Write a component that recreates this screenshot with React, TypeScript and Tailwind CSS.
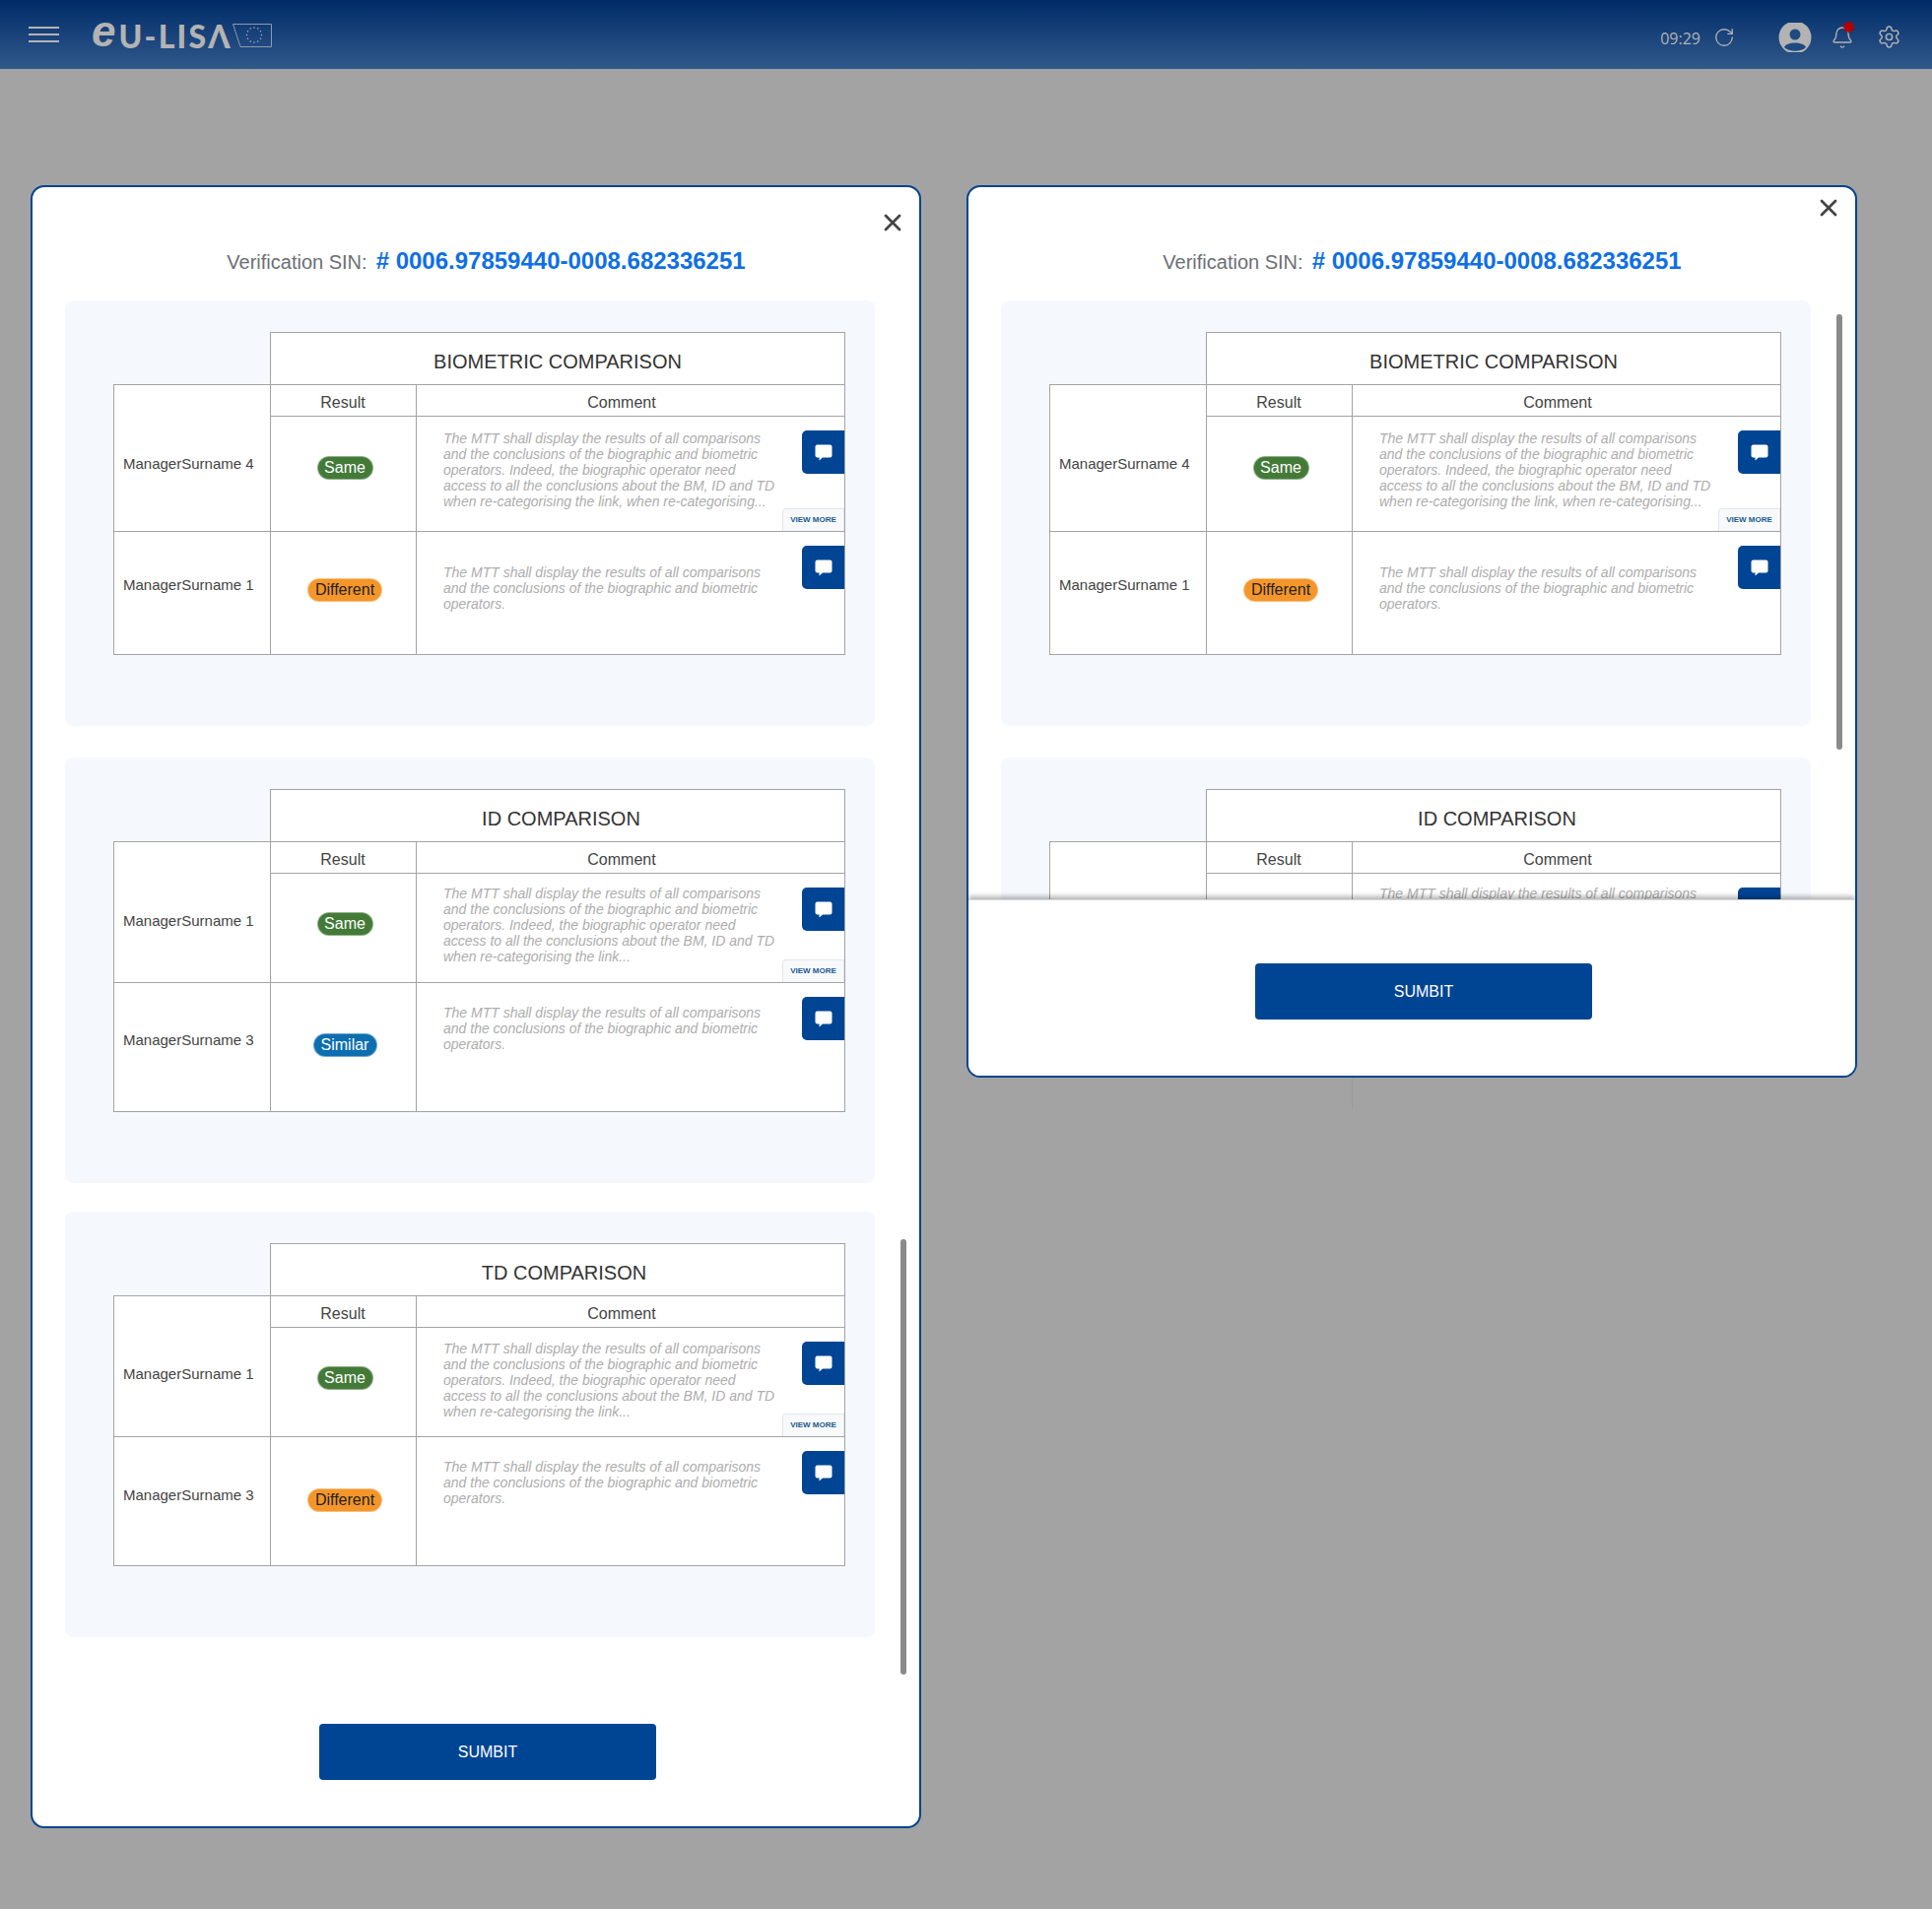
import { Bell, RotateCw, Settings, X } from "lucide-react";

type Status = "Same" | "Different" | "Similar";

type Row = {
  name: string;
  status: Status;
  text: string;
  labelPad: string;
  pillPad: string;
  commentPad: string;
  viewMore?: boolean;
};

type Section = {
  title: string;
  titlePad: string;
  gridRows: string;
  rows: [Row, Row];
};

const shortText =
  "The MTT shall display the results of all comparisons and the conclusions of the biographic and biometric operators.";
const longBase =
  "The MTT shall display the results of all comparisons and the conclusions of the biographic and biometric operators. Indeed, the biographic operator need access to all the conclusions about the BM, ID and TD when re-categorising the link";

const sections: Section[] = [
  {
    title: "BIOMETRIC COMPARISON",
    titlePad: "pl-0",
    gridRows: "grid-rows-[31px_117px_125px]",
    rows: [
      { name: "ManagerSurname 4", status: "Same", text: longBase + ", when re-categorising...", labelPad: "pt-[12px]", pillPad: "pb-[12px]", commentPad: "pt-[14px]", viewMore: true },
      { name: "ManagerSurname 1", status: "Different", text: shortText, labelPad: "pb-[16px]", pillPad: "pb-[7px]", commentPad: "pt-[33px]" },
    ],
  },
  {
    title: "ID COMPARISON",
    titlePad: "pl-[7px]",
    gridRows: "grid-rows-[31px_111px_131px]",
    rows: [
      { name: "ManagerSurname 1", status: "Same", text: longBase + "...", labelPad: "pt-[19px]", pillPad: "pb-[9px]", commentPad: "pt-[12px]", viewMore: true },
      { name: "ManagerSurname 3", status: "Similar", text: shortText, labelPad: "pb-[13px]", pillPad: "pb-[4px]", commentPad: "pt-[22px]" },
    ],
  },
  {
    title: "TD COMPARISON",
    titlePad: "pl-[13px]",
    gridRows: "grid-rows-[31px_111px_131px]",
    rows: [
      { name: "ManagerSurname 1", status: "Same", text: longBase + "...", labelPad: "pt-[17px]", pillPad: "pb-[9px]", commentPad: "pt-[13px]", viewMore: true },
      { name: "ManagerSurname 3", status: "Different", text: shortText, labelPad: "pb-[12px]", pillPad: "pb-[3px]", commentPad: "pt-[22px]" },
    ],
  },
];

function Logo() {
  return (
    <div className="ml-[33px] pt-[3px] flex items-center text-[#b3b3b3] font-['Lato',sans-serif]">
      <span className="text-[44px] leading-none font-bold italic font-['Liberation_Sans',sans-serif] mr-[3px] -mt-[9px]">e</span>
      <span className="text-[32px] leading-none font-black tracking-[2.2px]">U-LISΛ</span>
      <svg width="40" height="24" viewBox="0 0 40 24" className="-mt-[1px]" fill="none">
        <path d="M0.5 0.5H39.5V23.5H8Z" stroke="#8f9bab" strokeWidth="1" />
        {[0, 30, 60, 90, 120, 150, 180, 210, 240, 270, 300, 330].map((a) => (
          <circle
            key={a}
            cx={22 + 7.5 * Math.cos((a * Math.PI) / 180)}
            cy={11.5 + 7.5 * Math.sin((a * Math.PI) / 180)}
            r="0.8"
            fill="#a8b0bc"
          />
        ))}
      </svg>
    </div>
  );
}

function TopBar() {
  return (
    <header className="h-[70px] shrink-0 flex items-center bg-gradient-to-b from-[#002b67] to-[#30598c] pl-[29px] pr-[31px]">
      <div className="flex flex-col gap-[4.5px]">
        <span className="block w-[31px] h-[2.5px] bg-[#b3b3b3]" />
        <span className="block w-[31px] h-[2.5px] bg-[#b3b3b3]" />
        <span className="block w-[31px] h-[2.5px] bg-[#b3b3b3]" />
      </div>
      <Logo />
      <div className="ml-auto flex items-center pt-[5px] text-[#b3b3b3]">
        <span className="mt-[3px] text-[16px] font-['Open_Sans',sans-serif]">09:29</span>
        <RotateCw size={22} strokeWidth={1.4} className="ml-[13px]" />
        <svg width="34" height="30" viewBox="0 0 34 30" className="ml-[44px]">
          <circle cx="17" cy="15" r="16.5" fill="#b3b3b3" />
          <circle cx="17" cy="12" r="5.5" fill="#1f4a80" />
          <path d="M6 25c2-6 20-6 22 0-5 5-17 5-22 0Z" fill="#1f4a80" />
        </svg>
        <span className="relative ml-[19px] block">
          <Bell size={24} strokeWidth={1.3} />
          <span className="absolute -top-[3px] right-[1px] w-[9px] h-[9px] rounded-full bg-[#b50000] shadow-[0_0_0_1.5px_rgba(181,0,0,0.5)]" />
        </span>
        <Settings size={25} strokeWidth={1.4} className="ml-[23px]" />
      </div>
    </header>
  );
}

function Pill({ status }: { status: Status }) {
  const color =
    status === "Same"
      ? "bg-[#437a38] text-white w-[57px]"
      : status === "Different"
        ? "bg-[#f4962a] text-[#222] w-[76px]"
        : "bg-[#0d6eb0] text-white w-[65px]";
  return (
    <span className={`${color} h-[24px] rounded-full border border-white/40 flex items-center justify-center text-[16px] leading-none`}>
      {status}
    </span>
  );
}

function CommentIcon() {
  return (
    <svg width="18" height="17" viewBox="0 0 18 17">
      <path
        d="M2.5 0.5h13a2 2 0 0 1 2 2v9a2 2 0 0 1-2 2H8l-3.5 3v-3h-2a2 2 0 0 1-2-2v-9a2 2 0 0 1 2-2Z"
        fill="#fff"
      />
    </svg>
  );
}

function ResultCells({ row }: { row: Row }) {
  return (
    <>
      <div className={`border-l border-t border-[#a3a3a3] flex items-center justify-center pl-[3px] ${row.pillPad}`}>
        <Pill status={row.status} />
      </div>
      <div className={`relative border-l border-t border-[#a3a3a3] pl-[27px] ${row.commentPad}`}>
        <p className="w-[340px] text-[14px] leading-[16px] italic text-[#adadad]">{row.text}</p>
        <button className="absolute top-[14px] right-0 w-[43px] h-[44px] rounded-l-[5px] bg-[#004494] flex items-center justify-center">
          <CommentIcon />
        </button>
        {row.viewMore && (
          <span className="absolute bottom-0 right-0 w-[63px] h-[23px] rounded-tl-[4px] border border-b-0 border-[#e3e6ea] bg-[#f8f9fa] flex items-center justify-center text-[8px] font-bold text-[#1a5a90]">
            VIEW MORE
          </span>
        )}
      </div>
    </>
  );
}

function ComparisonCard({ section }: { section: Section }) {
  const [first, second] = section.rows;
  return (
    <section className="h-[432px] rounded-[8px] bg-[#f5f9fe] pt-[32px] pl-[49px]">
      <div className="w-[743px]">
        <div className="ml-[159px] h-[53px] border border-b-0 border-[#a3a3a3] bg-white flex items-center justify-center pt-[6px] text-[20px] text-[#333]">
          <span className={section.titlePad}>{section.title}</span>
        </div>
        <div className={`grid grid-cols-[158px_148px_1fr] ${section.gridRows} border border-[#a3a3a3] bg-white text-[#444]`}>
          <div className={`row-span-2 flex items-center pl-[9px] text-[15px] ${first.labelPad}`}>{first.name}</div>
          <div className="border-l border-[#a3a3a3] flex items-center justify-center pt-[4px] pr-[1px] text-[16px]">Result</div>
          <div className="border-l border-[#a3a3a3] flex items-center justify-center pt-[4px] pr-[18px] text-[16px]">Comment</div>
          <ResultCells row={first} />
          <div className={`border-t border-[#a3a3a3] flex items-center pl-[9px] text-[15px] ${second.labelPad}`}>{second.name}</div>
          <ResultCells row={second} />
        </div>
      </div>
    </section>
  );
}

function Title() {
  return (
    <h2 className="flex items-baseline justify-center gap-[9px] pl-[21px] h-[115px] pt-[57px]">
      <span className="text-[20px] text-[#6c6f75]">Verification SIN:</span>
      <span className="text-[24px] font-bold text-[#0e6fe6]">
        # 0006.97859440-0008.682336251
      </span>
    </h2>
  );
}

function SubmitButton() {
  return (
    <button className="ml-[291px] w-[342px] h-[57px] rounded-[4px] bg-[#004494] text-white text-[16px]">
      SUMBIT
    </button>
  );
}

function Scrollbar({ className }: { className: string }) {
  return <span className={`absolute w-[6px] rounded-full bg-[#8a8a8a] ${className}`} />;
}

export default function App() {
  return (
    <div className="w-[1961px] h-[1938px] flex flex-col bg-[#a3a3a3] font-['Liberation_Sans',Arial,sans-serif]">
      <TopBar />
      <main className="flex items-start gap-[46px] pl-[31px] pt-[118px]">
        {/* full dialog */}
        <div className="relative w-[904px] h-[1668px] shrink-0 rounded-[14px] border-2 border-[#00448f] bg-white overflow-hidden">
          <X size={28} strokeWidth={2.4} className="absolute top-[22px] right-[13px] text-[#444]" />
          <Scrollbar className="top-[1068px] right-[13px] h-[442px]" />
          <Title />
          <div className="w-[822px] ml-[33px] flex flex-col">
            <ComparisonCard section={sections[0]} />
            <div className="h-[32px]" />
            <ComparisonCard section={sections[1]} />
            <div className="h-[29px]" />
            <ComparisonCard section={sections[2]} />
          </div>
          <div className="pt-[88px]">
            <SubmitButton />
          </div>
        </div>

        {/* same dialog, scrolled in a short window */}
        <div className="relative w-[904px] h-[906px] shrink-0">
          <span className="absolute top-[904px] left-[391px] w-px h-[34px] bg-[#9c9c9c]" />
          <div className="relative h-full rounded-[14px] border-2 border-[#00448f] bg-white overflow-hidden flex flex-col">
            <X size={28} strokeWidth={2.4} className="absolute z-10 top-[7px] right-[13px] text-[#444]" />
            <Scrollbar className="top-[129px] right-[13px] h-[442px] z-10" />
            <div className="h-[723px] shrink-0 overflow-hidden">
              <Title />
              <div className="w-[822px] ml-[33px] flex flex-col">
                <ComparisonCard section={sections[0]} />
                <div className="h-[32px]" />
                <ComparisonCard section={sections[1]} />
              </div>
            </div>
            <div className="flex-1 bg-white pt-[64px] shadow-[0_-3px_5px_rgba(0,0,0,0.3)] z-0 border-t border-[#d8d8d8]">
              <SubmitButton />
            </div>
          </div>
        </div>
      </main>
    </div>
  );
}
